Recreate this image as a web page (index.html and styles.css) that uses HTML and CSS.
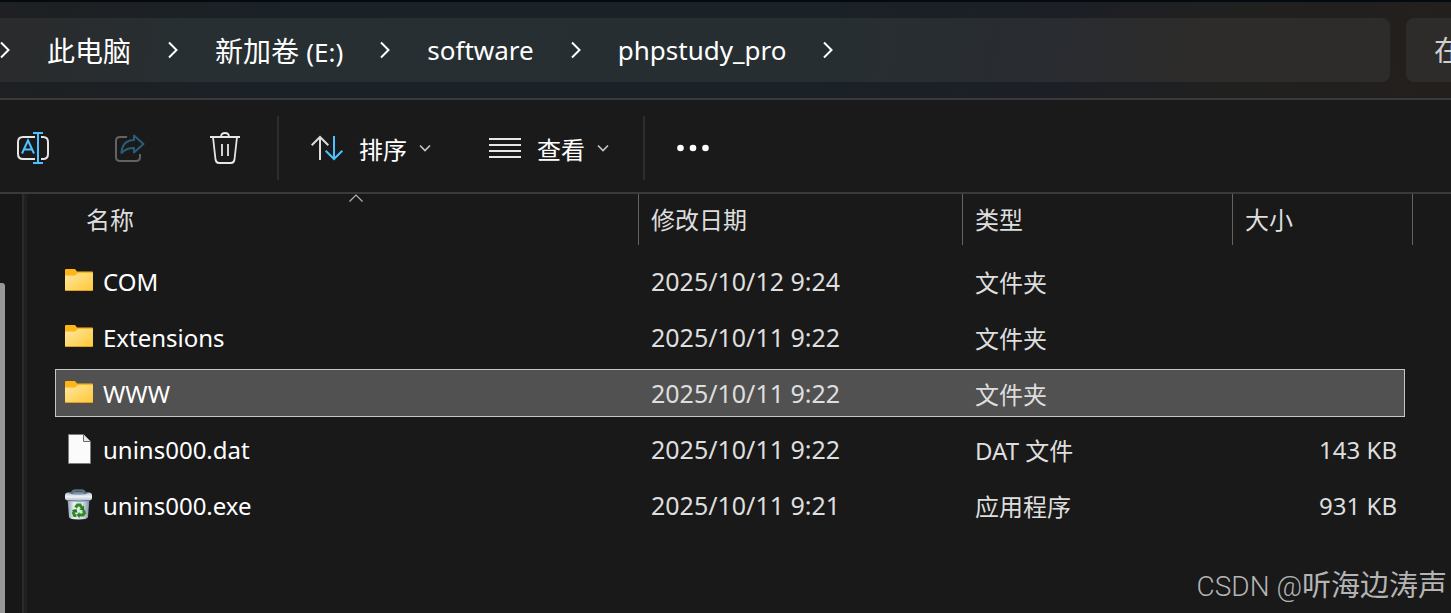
FILE: index.html
```html
<!DOCTYPE html>
<html lang="zh-CN">
<head>
  <meta charset="UTF-8">
  <title>phpstudy_pro</title>
  <link rel="stylesheet" href="styles.css">
</head>
<body>

<!-- shared icons -->
<svg class="symbols" aria-hidden="true">
  <defs>
    <linearGradient id="folderFront" x1="0" y1="0" x2="1" y2="1">
      <stop offset="0" stop-color="#ffe6a2"/>
      <stop offset="1" stop-color="#ffca38"/>
    </linearGradient>
    <linearGradient id="binBody" x1="0" y1="0" x2="1" y2="0">
      <stop offset="0" stop-color="#8d9bb0"/>
      <stop offset="0.3" stop-color="#eef2f8"/>
      <stop offset="0.7" stop-color="#d3dbe6"/>
      <stop offset="1" stop-color="#7f8da3"/>
    </linearGradient>
    <linearGradient id="binLid" x1="0" y1="0" x2="0" y2="1">
      <stop offset="0" stop-color="#b4c0cf"/>
      <stop offset="0.5" stop-color="#edf2f8"/>
      <stop offset="1" stop-color="#a9b5c6"/>
    </linearGradient>
  </defs>
  <symbol id="chevron-right" viewBox="0 0 10 18">
    <path d="M1 1.5 8.5 9 1 16.5" fill="none" stroke="#fff" stroke-width="2"/>
  </symbol>
  <symbol id="chevron-down" viewBox="0 0 12 8">
    <path d="M1 1.5 6 6.5 11 1.5" fill="none" stroke="#c8c8c8" stroke-width="1.6"/>
  </symbol>
  <symbol id="folder" viewBox="0 0 28 32">
    <path d="M0 5q0-1 1-1h9l2 2.5h15q1 0 1 1V25q0 1-1 1H1q-1 0-1-1z" fill="#fdb614"/>
    <path d="M0 10.500h9.500q1 0 2-1.300L13 8h14q1 0 1 1v15q0 1-1 1H1q-1 0-1-1z" fill="url(#folderFront)"/>
    <path d="M.5 25.500h27" stroke="#e2a11c" stroke-width="1"/>
  </symbol>
</svg>

<div class="window">
  <header class="address-row">
    <nav class="address-bar" aria-label="地址">
      <svg class="chevron"><use href="#chevron-right"/></svg>
      <a href="#">此电脑</a>
      <svg class="chevron"><use href="#chevron-right"/></svg>
      <a href="#">新加卷 <span class="latin">(E:)</span></a>
      <svg class="chevron"><use href="#chevron-right"/></svg>
      <a href="#" class="latin">software</a>
      <svg class="chevron"><use href="#chevron-right"/></svg>
      <a href="#" class="latin">phpstudy_pro</a>
      <svg class="chevron"><use href="#chevron-right"/></svg>
    </nav>
    <input class="search" type="text" placeholder="在" aria-label="搜索">
  </header>

  <div class="toolbar">
    <div class="group icons">
      <button type="button" aria-label="重命名">
        <svg class="icon" viewBox="0 0 32 32" fill="none" stroke="#e6e6e6" stroke-width="2">
          <path d="M18 5H6Q1 5 1 10v12q0 5 5 5h12M24 5h2q5 0 5 5v12q0 5-5 5h-2"/>
          <path d="M5 21.500 11 8.500l6 13M7.500 17.500h7M21 1v30M16 1h10M16 31h10" stroke="#4cc2ff"/>
        </svg>
      </button>
      <button type="button" aria-label="共享" disabled>
        <svg class="icon" viewBox="0 0 32 32" fill="none" stroke="#636363" stroke-width="2">
          <path d="M14 5H7Q3 5 3 9v16q0 4 4 4h16q4 0 4-4v-3"/>
          <path d="M21 3.500 30.500 12 21 20.500V16q-8 0-12.500 5Q9 8.500 21 8z" stroke="#2b5c77" stroke-linejoin="round"/>
        </svg>
      </button>
      <button type="button" aria-label="删除">
        <svg class="icon" viewBox="0 0 32 32" fill="none" stroke="#e6e6e6" stroke-width="1.800">
          <path d="M1 5h30M12 5q0-4 4-4t4 4M4 5l2.500 22.500Q7 31 10 31h12q3 0 3.500-3.500L28 5M13 12v12M19 12v12"/>
        </svg>
      </button>
    </div>
    <div class="group menus">
      <button type="button">
        <svg class="icon" viewBox="0 0 32 32" fill="none" stroke="#dcdce2" stroke-width="2">
          <path d="M9 28V5M0.700 13.300 9 5l8.300 8.300"/>
          <path d="M23 4v23M14.700 18.700 23 27l8.300-8.300" stroke="#4cc2ff"/>
        </svg>
        <span>排序</span>
        <svg class="arrow"><use href="#chevron-down"/></svg>
      </button>
      <button type="button">
        <svg class="icon" viewBox="0 0 32 32" fill="none" stroke="#e6e6e6" stroke-width="2">
          <path d="M0 7h32M0 13h32M0 19h32M0 25h32"/>
        </svg>
        <span>查看</span>
        <svg class="arrow"><use href="#chevron-down"/></svg>
      </button>
    </div>
    <div class="group">
      <button type="button" aria-label="查看更多">
        <svg class="icon" viewBox="0 0 32 32" fill="#fff">
          <circle cx="3.500" cy="16" r="3.300"/>
          <circle cx="16" cy="16" r="3.300"/>
          <circle cx="28.500" cy="16" r="3.300"/>
        </svg>
      </button>
    </div>
  </div>

  <div class="body">
    <aside class="nav-pane">
      <div class="scroll-thumb"></div>
    </aside>
    <main class="files">
      <table>
        <thead>
          <tr>
            <th class="sorted">名称
              <svg class="sort-mark" viewBox="0 0 14 8"><path d="M.5 7.500 7 1l6.500 6.500" fill="none" stroke="#b5b5b5" stroke-width="1.200"/></svg>
            </th>
            <th>修改日期</th>
            <th>类型</th>
            <th>大小</th>
          </tr>
        </thead>
        <tbody>
          <tr>
            <td class="name"><svg class="file-icon"><use href="#folder"/></svg>COM</td>
            <td class="date">2025/10/12 9:24</td>
            <td>文件夹</td>
            <td class="size"></td>
          </tr>
          <tr>
            <td class="name"><svg class="file-icon"><use href="#folder"/></svg>Extensions</td>
            <td class="date">2025/10/11 9:22</td>
            <td>文件夹</td>
            <td class="size"></td>
          </tr>
          <tr class="selected">
            <td class="name"><svg class="file-icon"><use href="#folder"/></svg>WWW</td>
            <td class="date">2025/10/11 9:22</td>
            <td>文件夹</td>
            <td class="size"></td>
          </tr>
          <tr>
            <td class="name">
              <svg class="file-icon" viewBox="0 0 28 32">
                <path d="M3.500 1.500h15l7 7v22h-22z" fill="#fbfbfb" stroke="#7d7d7d"/>
                <path d="M18.500 1.500v7h7" fill="#e9e9e9" stroke="#6a6a6a"/>
              </svg>unins000.dat
            </td>
            <td class="date">2025/10/11 9:22</td>
            <td>DAT 文件</td>
            <td class="size">143 KB</td>
          </tr>
          <tr>
            <td class="name">
              <svg class="file-icon" viewBox="0 0 28 32">
                <path d="M2.500 9h22L23 28q-.3 2.500-9.500 2.500T4 28z" fill="url(#binBody)"/>
                <path d="M0 6q0-2 3-2.500h21q3 .5 3 2.500v3q0 2-3 2.500-10.500 1.200-21 0Q0 11 0 9z" fill="url(#binLid)"/>
                <path d="M3 11.500q10.500 1.300 21 0" fill="none" stroke="#66748a"/>
                <path d="M3 4.500q10.500-2.500 21 0-10.500 2.500-21 0z" fill="#8494a8"/>
                <path d="M7 5q0-3.500 4-3.500h5q4 0 4 3.500" fill="none" stroke="#5a7086" stroke-width="2.400"/>
                <g fill="none" stroke="#2c8c1c" stroke-width="3">
                  <path d="M10.500 18.500 12.500 16h2.500l2 3M18.500 21l1 3-1.500 2h-4M11.500 26.500H9.500L8.500 24l1.500-3"/>
                </g>
                <path d="M19 16.500v4.500h-4.500zM14.500 23v6.500L11.800 26zM6.500 21.500l5-1.500 1 4z" fill="#247a18"/>
              </svg>unins000.exe
            </td>
            <td class="date">2025/10/11 9:21</td>
            <td>应用程序</td>
            <td class="size">931 KB</td>
          </tr>
        </tbody>
      </table>
    </main>
  </div>
  <div class="watermark"><span>CSDN @</span>听海边涛声</div>
</div>

</body>
</html>
```
FILE: styles.css
```css
* {
  box-sizing: border-box;
}
body {
  margin: 0;
  background: #191919;
  color: #fff;
  font-family: "Noto Sans", "Noto Sans CJK SC", sans-serif;
  font-size: 24px;
}
.symbols {
  position: absolute;
  width: 0;
  height: 0;
}
.window {
  position: relative;
  display: flex;
  flex-direction: column;
  min-height: 100vh;
  overflow: hidden;
}

/* address row */
.address-row {
  display: flex;
  gap: 16px;
  padding: 16px 0;
  border-top: 2px solid #030a10;
  border-bottom: 2px solid #3a3a3a;
  background: linear-gradient(100deg, #1e2022 0%, #1a2127 20%, #1a2127 55%, #1c1f26 72%, #20201f 85%, #231f1d 100%);
}
.address-bar {
  flex: 1;
  display: flex;
  align-items: center;
  gap: 37px;
  height: 64px;
  border-radius: 0 8px 8px 0;
  background: linear-gradient(100deg, #2a2b2c 0%, #272f32 15%, #272e31 60%, #292c31 75%, #2d2c2b 85%);
  font-size: 28px;
}
.address-bar a {
  color: #fff;
  text-decoration: none;
  white-space: nowrap;
}
.address-bar .latin {
  font-size: 26px;
}
.chevron {
  flex: none;
  width: 10px;
  height: 18px;
}
.search {
  width: 45px;
  height: 64px;
  padding: 0 0 0 28px;
  border: none;
  border-radius: 8px 0 0 8px;
  background: #2d2c2b;
  color: #fff;
  font: inherit;
  font-size: 28px;
}
.search::placeholder {
  color: #cfcfcf;
}

/* toolbar */
.toolbar {
  display: flex;
  padding: 16px 0 12px;
  border-bottom: 2px solid #3a3a3a;
  background: #1a1a1a;
}
.group {
  display: flex;
  align-items: center;
  height: 64px;
  padding: 0 32px;
}
.group + .group {
  border-left: 2px solid #2d2d2d;
}
.icons {
  gap: 64px;
  padding: 0 36px 0 17px;
}
.menus {
  gap: 58px;
  padding-right: 34px;
}
.toolbar button {
  display: flex;
  align-items: center;
  padding: 0;
  border: none;
  background: none;
  color: #fff;
  font: inherit;
}
.toolbar span {
  margin: 0 12px 0 16px;
}
.icon {
  width: 32px;
  height: 32px;
}
.arrow {
  width: 12px;
  height: 8px;
}

/* body */
.body {
  flex: 1;
  display: flex;
}
.nav-pane {
  display: flex;
  width: 27px;
  padding-top: 89px;
  border-right: 3px solid #202020;
  background: linear-gradient(to left, #2b2b2b 2px, #171717 2px);
}
.scroll-thumb {
  width: 5px;
  border-radius: 0 3px 0 0;
  background: #989898;
}
.files {
  flex: 1;
  padding: 0 38px 0 28px;
}
table,
thead {
  display: block;
}
tbody {
  display: flex;
  flex-direction: column;
  gap: 8px;
  padding: 12px 8px 0 0;
}
tr {
  display: grid;
  grid-template-columns: 1fr 324px 270px 172px;
  align-items: center;
  height: 48px;
}
thead tr {
  grid-template-columns: 1fr 324px 270px 180px;
  height: 51px;
  padding-left: 19px;
}
th,
td {
  padding: 0 12px;
  color: #dedede;
  font-weight: normal;
  text-align: left;
  white-space: nowrap;
}
th {
  height: 51px;
  border-right: 1px solid #636363;
  line-height: 51px;
}
.sorted {
  position: relative;
}
.sort-mark {
  position: absolute;
  top: 0;
  left: 50%;
  width: 14px;
  height: 8px;
  margin-left: -7px;
}
.name {
  display: flex;
  align-items: center;
  gap: 10px;
  padding-left: 10px;
  color: #fff;
}
.file-icon {
  flex: none;
  width: 28px;
  height: 32px;
}
.date {
  font-size: 25px;
}
.size {
  padding-right: 8px;
  text-align: right;
}
.selected {
  background: #515151;
  box-shadow: inset 0 0 0 1px #c6c6c6;
}

.watermark {
  position: absolute;
  right: 4px;
  bottom: 6px;
  color: #b4b4b4;
  font-family: Roboto, "Noto Sans CJK SC", sans-serif;
  font-size: 29px;
  line-height: 40px;
}
.watermark span {
  font-size: 28px;
  font-weight: 300;
}
```
